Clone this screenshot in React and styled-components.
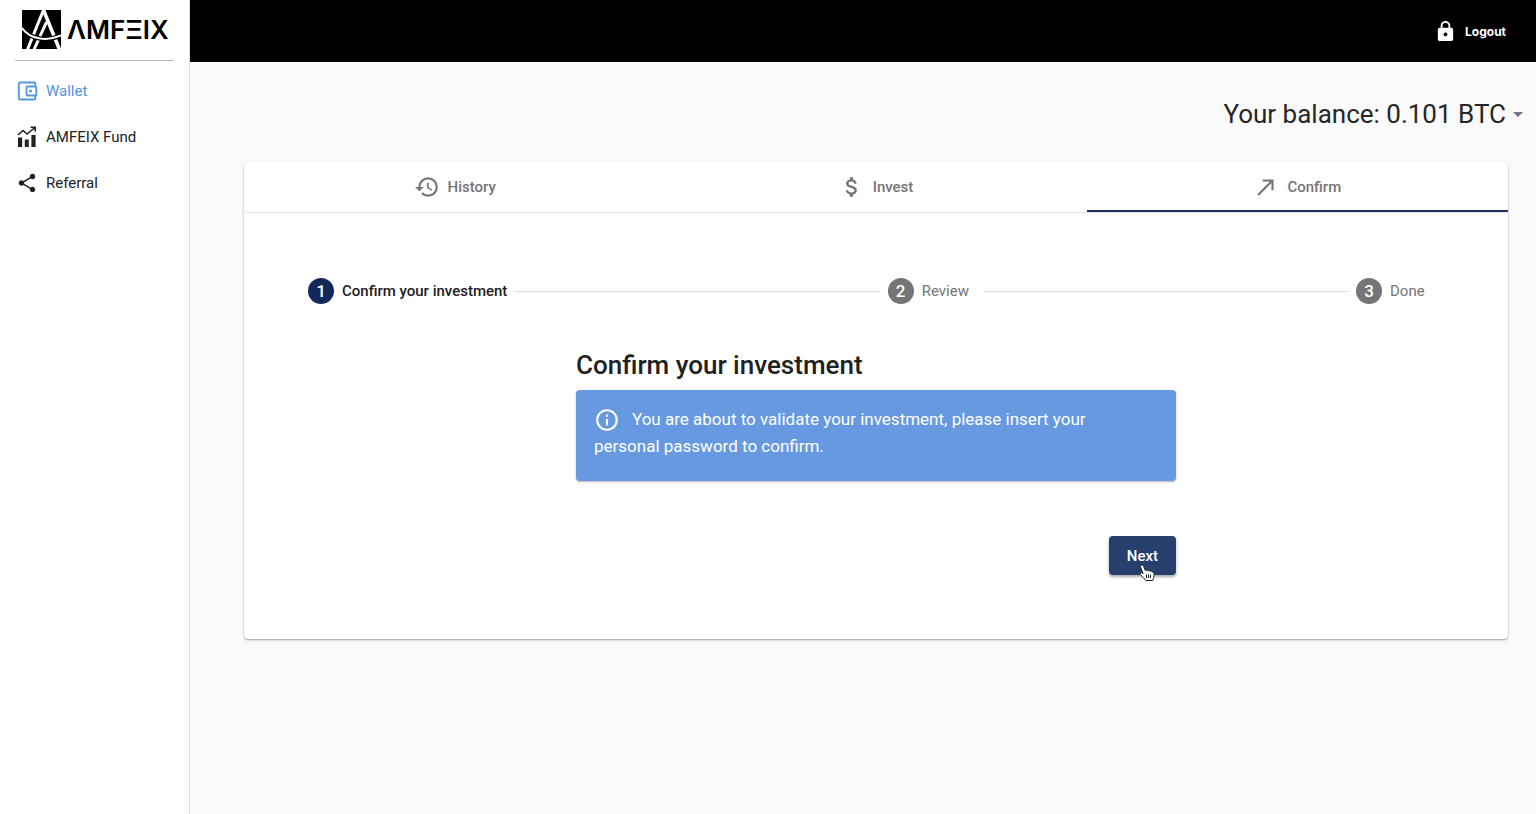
import React from "react";
import styled, { createGlobalStyle } from "styled-components";
import {
  MdShare,
  MdLock,
  MdArrowDropDown,
  MdHistory,
  MdAttachMoney,
  MdCallMade,
  MdInfoOutline,
} from "react-icons/md";

const GlobalStyle = createGlobalStyle`
  *, *::before, *::after { box-sizing: border-box; }
  body {
    margin: 0;
    background: #fafafa;
    color: #212121;
    font-family: Roboto, "Liberation Sans", sans-serif;
    font-size: 15px;
  }
  button { font-family: inherit; border: 0; cursor: pointer; }
  svg { display: block; flex: none; }
`;

const Shell = styled.div`
  display: grid;
  grid-template-columns: 190px 1fr;
  min-height: 100vh;
`;

const Sidebar = styled.aside`
  background: #fff;
  border-right: 1px solid #dedede;
`;

const Brand = styled.a`
  display: flex;
  align-items: center;
  gap: 6px;
  height: 61px;
  margin: 0 15px;
  padding: 0 0 2px 7px;
  border-bottom: 1px solid #b5b5b5;
  color: #000;
  text-decoration: none;
`;

const Wordmark = styled.span`
  padding-top: 2px;
  font-family: Inter, sans-serif;
  font-size: 26px;
  font-weight: 600;
  line-height: 32px;
`;

const Nav = styled.nav`
  display: flex;
  flex-direction: column;
  padding: 7px 16px;
`;

const NavItem = styled.a`
  display: flex;
  align-items: center;
  gap: 8px;
  height: 46px;
  color: ${({ $active }) => ($active ? "#5295e0" : "#212121")};
  text-decoration: none;
`;

const Content = styled.div`
  display: flex;
  flex-direction: column;
`;

const TopBar = styled.header`
  display: flex;
  align-items: center;
  justify-content: flex-end;
  height: 62px;
  padding-right: 30px;
  background: #000;
`;

const LogoutButton = styled.button`
  display: flex;
  align-items: center;
  gap: 8px;
  padding: 0;
  background: none;
  color: #fff;
  font-family: Inter, sans-serif;
  font-size: 12px;
  font-weight: 700;
`;

const BalanceRow = styled.div`
  display: flex;
  justify-content: flex-end;
  padding: 32px 6px 28px;
`;

const BalanceButton = styled.button`
  display: flex;
  align-items: center;
  padding: 0;
  background: none;
  color: #262626;
  font-size: 26px;
  line-height: 40px;

  svg { color: #757575; }
`;

const Card = styled.main`
  margin: 0 28px 0 54px;
  background: #fff;
  border-radius: 4px;
  box-shadow: 0 1px 3px rgba(0, 0, 0, 0.2), 0 1px 1px rgba(0, 0, 0, 0.2);
`;

const Tabs = styled.div`
  display: grid;
  grid-template-columns: repeat(3, 1fr);
  border-bottom: 1px solid #e6e6e6;
`;

const Tab = styled.button`
  display: flex;
  align-items: center;
  justify-content: center;
  gap: 8px;
  height: 50px;
  padding: 2px 0 0;
  background: none;
  border-bottom: 2px solid ${({ $selected }) => ($selected ? "#1d2f5f" : "transparent")};
  color: #757575;
  font-size: 15px;
  font-weight: 500;
`;

const Stepper = styled.ol`
  display: flex;
  align-items: center;
  gap: 8px;
  margin: 0;
  padding: 65px 64px 0;
  list-style: none;
`;

const Step = styled.li`
  display: flex;
  align-items: center;
  gap: 8px;
  color: ${({ $current }) => ($current ? "#212121" : "#757575")};
  font-size: 15px;
  font-weight: ${({ $current }) => ($current ? 500 : 400)};
`;

const StepNumber = styled.span`
  display: grid;
  place-items: center;
  width: 26px;
  height: 26px;
  border-radius: 50%;
  background: ${({ $current }) => ($current ? "#10295a" : "#757575")};
  color: #fff;
  font-size: 17px;
  font-weight: 500;
`;

const StepLabel = styled.span`
  min-width: 54px;
`;

const StepLine = styled.li`
  flex: 1;
  height: 1px;
  background: #dcdcdc;
`;

const Form = styled.section`
  max-width: 600px;
  margin: 0 auto;
  padding: 44px 0 64px;
`;

const Title = styled.h1`
  margin: 0 0 8px;
  font-size: 26px;
  font-weight: 500;
  line-height: 34px;
`;

const Notice = styled.p`
  margin: 0;
  padding: 16px 64px 21px 18px;
  border-radius: 4px;
  background: #6699e0;
  box-shadow: 0 1px 2px rgba(0, 0, 0, 0.3);
  color: #fff;
  font-size: 17px;
  line-height: 27px;

  svg {
    display: inline-block;
    margin-right: 12px;
    vertical-align: bottom;
  }
`;

const Actions = styled.div`
  display: flex;
  justify-content: flex-end;
  margin-top: 55px;
`;

const NextButton = styled.button`
  position: relative;
  height: 39px;
  padding: 0 18px;
  border-radius: 4px;
  background: #263f6c;
  box-shadow: 0 2px 3px rgba(0, 0, 0, 0.35);
  color: #fff;
  font-size: 15px;
  font-weight: 500;
`;

const Pointer = styled.svg`
  position: absolute;
  top: 28px;
  left: 30px;
`;

const LogoMark = () => (
  <svg width="39" height="39" viewBox="0 0 39 39" aria-hidden="true">
    <rect width="39" height="39" fill="#000" />
    <g fill="none" stroke="#fff">
      <path d="M5.500 39.500 21.500 0" strokeWidth="3" />
      <path d="M21.500 0 37.500 39.500" strokeWidth="3.600" />
      <path d="M12 39.500 24.500 12" strokeWidth="3" />
      <path d="M0 18C8 29 24 32 39 25.500" stroke="#000" strokeWidth="4.500" />
      <path d="M0 18C8 29 24 32 39 25.500" strokeWidth="2" />
    </g>
  </svg>
);

const WalletIcon = () => (
  <svg width="22" height="22" viewBox="0 0 22 22" aria-hidden="true">
    <g fill="none" stroke="currentColor" strokeWidth="1.800" strokeLinejoin="round">
      <path d="M19.300 6V3.500a1 1 0 0 0-1-1H4a1.200 1.200 0 0 0-1.200 1.200v14.600A1.200 1.200 0 0 0 4 19.500h14.300a1 1 0 0 0 1-1V16" />
      <rect x="10.500" y="6.500" width="9.800" height="9" rx="1" />
    </g>
    <circle cx="14.500" cy="11" r="1.500" fill="currentColor" />
  </svg>
);

const FundIcon = () => (
  <svg width="22" height="22" viewBox="0 0 22 22" aria-hidden="true">
    <path
      d="M2 11.500h4.200V21H2zM8.800 13.500h4V21h-4zM15.400 9h4.200v12h-4.200z"
      fill="currentColor"
    />
    <path
      d="m2 9 5-4.500 4 3.500 8-6.500M14.500 1.300h4.700V5.500"
      fill="none"
      stroke="currentColor"
      strokeWidth="1.600"
    />
  </svg>
);

const HandPointer = () => (
  <Pointer width="17" height="18" viewBox="0 0 17 18" aria-hidden="true">
    <path
      d="M2 1.500c1-.9 2.200-.3 2.600.8l1.700 4.200c.7-.8 1.800-.6 2.200.3.800-.7 1.800-.4 2.200.4 1-.6 2.200 0 2.400.9.900-.2 1.800.4 1.900 1.400.2 2.300-.3 4.600-1.300 7H6.500C5.400 14.200 3 12.300 1.200 10.400c-.7-1 .4-2.200 1.600-1.600l1.300.8L1.600 3.200c-.2-.7-.1-1.300.4-1.700Z"
      fill="#fff"
      stroke="#222"
      strokeWidth="1"
    />
    <path d="M7.500 10.500v3.500M9.500 10.500v3.500M11.500 10.500v3.500" stroke="#222" strokeWidth="1" />
  </Pointer>
);

const navItems = [
  { label: "Wallet", icon: <WalletIcon />, active: true },
  { label: "AMFEIX Fund", icon: <FundIcon /> },
  { label: "Referral", icon: <MdShare size={22} /> },
];

const tabs = [
  { label: "History", icon: <MdHistory size={26} /> },
  { label: "Invest", icon: <MdAttachMoney size={26} /> },
  { label: "Confirm", icon: <MdCallMade size={26} />, selected: true },
];

const steps = ["Confirm your investment", "Review", "Done"];

export default function App() {
  return (
    <>
      <GlobalStyle />
      <Shell>
        <Sidebar>
          <Brand href="#" aria-label="AMFEIX">
            <LogoMark />
            <Wordmark>ΛMFΞIX</Wordmark>
          </Brand>
          <Nav>
            {navItems.map(({ label, icon, active }) => (
              <NavItem key={label} href="#" $active={active}>
                {icon}
                {label}
              </NavItem>
            ))}
          </Nav>
        </Sidebar>
        <Content>
          <TopBar>
            <LogoutButton type="button">
              <MdLock size={23} />
              Logout
            </LogoutButton>
          </TopBar>
          <BalanceRow>
            <BalanceButton type="button">
              Your balance: 0.101 BTC
              <MdArrowDropDown size={24} />
            </BalanceButton>
          </BalanceRow>
          <Card>
            <Tabs role="tablist">
              {tabs.map(({ label, icon, selected }) => (
                <Tab
                  key={label}
                  type="button"
                  role="tab"
                  aria-selected={Boolean(selected)}
                  $selected={selected}
                >
                  {icon}
                  {label}
                </Tab>
              ))}
            </Tabs>
            <Stepper>
              {steps.map((label, index) => (
                <React.Fragment key={label}>
                  {index > 0 && <StepLine aria-hidden="true" />}
                  <Step $current={index === 0}>
                    <StepNumber $current={index === 0}>{index + 1}</StepNumber>
                    <StepLabel>{label}</StepLabel>
                  </Step>
                </React.Fragment>
              ))}
            </Stepper>
            <Form>
              <Title>Confirm your investment</Title>
              <Notice>
                <MdInfoOutline size={26} />
                You are about to validate your investment, please insert your personal password to
                confirm.
              </Notice>
              <Actions>
                <NextButton type="button">
                  Next
                  <HandPointer />
                </NextButton>
              </Actions>
            </Form>
          </Card>
        </Content>
      </Shell>
    </>
  );
}
